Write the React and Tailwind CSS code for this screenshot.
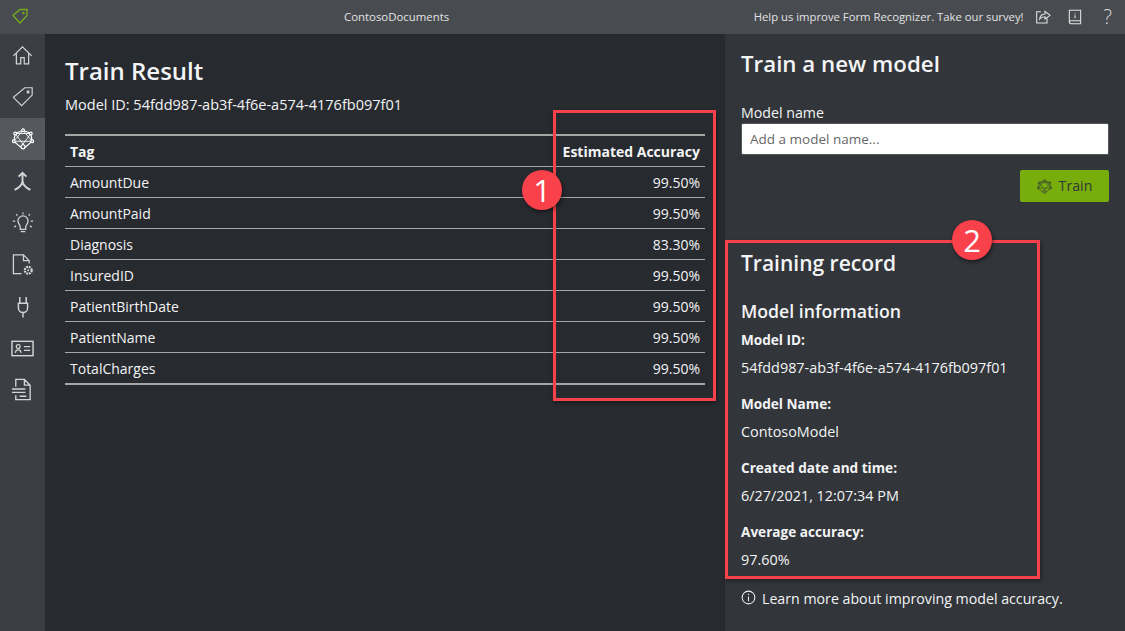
function NetIcon({ className = "", stroke = "#fff", fillC = "#55585d", sw = 1.3 }) {
  return (
    <svg viewBox="0 0 24 24" className={className} fill="none" stroke={stroke} strokeWidth={sw}>
      <path d="M12 2.5 L20.5 6 L22 14.5 L14.5 21 H9.5 L2 14.5 L3.5 6 Z" />
      <path d="M3.5 6 L20.5 6 M3.5 6 L14.5 21 M20.5 6 L9.5 21 M2 14.5 L12 2.5 M22 14.5 L12 2.5 M2 14.5 H22" strokeWidth={sw * 0.75} />
      <circle cx="12" cy="2.5" r="1.5" fill={fillC} />
      <circle cx="3.5" cy="6" r="1.5" fill={fillC} />
      <circle cx="20.5" cy="6" r="1.5" fill={fillC} />
      <circle cx="2" cy="14.5" r="1.5" fill={fillC} />
      <circle cx="22" cy="14.5" r="1.5" fill={fillC} />
      <circle cx="12" cy="20.5" r="2.2" fill={fillC} />
    </svg>
  );
}
const S = "#d4d4d4";
const side = [
  <svg viewBox="0 0 24 24" className="w-[21px] h-[21px]" fill="none" stroke={S} strokeWidth="1.4"><path d="M1.5 12.5 L12 2 L22.5 12.5 M5 9.5 V21.5 H10 V14.5 H14 V21.5 H19 V9.5" /></svg>,
  <svg viewBox="0 0 24 24" className="w-[22px] h-[22px] -mt-[2px]" fill="none" stroke={S} strokeWidth="1.3"><path d="M14 3 H22 V11 L10.5 22.5 L1.5 13.5 Z" /><circle cx="17.5" cy="7.5" r="1" fill={S} /></svg>,
  null,
  <svg viewBox="0 0 24 24" className="w-[21px] h-[23px]" fill="none" stroke={S} strokeWidth="2.2"><path d="M7.5 6.5 L12 2 L16.5 6.5 M12 3 V11 C12 16 8 19 3 21.5 M12 11 C12 16 16 19 21 21.5" /></svg>,
  <svg viewBox="0 0 24 24" className="w-[22px] h-[22px]" fill="none" stroke={S} strokeWidth="1.4"><path d="M9 19 V16 C9 14 6.5 13 6.5 9.8 A5.5 5.5 0 0 1 17.5 9.8 C17.5 13 15 14 15 16 V19 Z M9.5 21.5 H14.5" /><path d="M12 0.5 V2.5 M4.5 2.5 L5.9 3.9 M19.5 2.5 L18.1 3.9 M1 10 H3.5 M20.5 10 H23 M2.5 16.5 L4.5 15 M21.5 16.5 L19.5 15" /></svg>,
  <svg viewBox="0 0 24 24" className="w-[23px] h-[23px] -mt-[1px]" fill="none" stroke={S} strokeWidth="1.3"><path d="M11 21.5 H2.5 V2 H13 L19 8 V11 M13 2 V8 H19" /><circle cx="18" cy="18" r="3.6" strokeWidth="2.3" strokeDasharray="2 0.85" /><circle cx="18" cy="18" r="1" fill={S} stroke="none" /></svg>,
  <svg viewBox="0 0 24 24" className="w-[22px] h-[22px] -mt-[1px]" fill="none" stroke={S} strokeWidth="1.6"><path d="M8.5 1 V8 M15.5 1 V8 M7 8 H17 V13 A5 5 0 0 1 7 13 Z M12 18 V23.5" /></svg>,
  <svg viewBox="0 0 24 24" className="w-[23px] h-[23px] -mt-[1px]" fill="none" stroke={S} strokeWidth="1.5"><rect x="1" y="4.5" width="22" height="15" /><path d="M4.5 16.5 C5 12.5 10 12.5 10.5 16.5 M7.5 8 A2 2 0 1 0 7.6 12 A2 2 0 1 0 7.5 8 M13.5 10 H20 M13.5 14 H20" strokeWidth="1.3" /></svg>,
  <svg viewBox="0 0 24 24" className="w-[23px] h-[23px] -mt-[3px]" fill="none" stroke={S} strokeWidth="1.4"><path d="M5 9 V1.5 H14 L20 7.5 V22.5 H5 V18 M14 1.5 V7.5 H20 M1 11.5 H15 M1 15 H15 M9 19 H16" /></svg>,
];
const rows = ["AmountDue", "AmountPaid", "Diagnosis", "InsuredID", "PatientBirthDate", "PatientName", "TotalCharges"];
const acc = ["99.50%", "99.50%", "83.30%", "99.50%", "99.50%", "99.50%", "99.50%"];
const info = [
  ["Model ID:", "54fdd987-ab3f-4f6e-a574-4176fb097f01"],
  ["Model Name:", "ContosoModel"],
  ["Created date and time:", "6/27/2021, 12:07:34 PM"],
  ["Average accuracy:", "97.60%"],
];
function Badge({ n, className }) {
  return (
    <div className={"absolute w-[40px] h-[40px] rounded-full bg-[#f8414a] text-white text-[31px] leading-[40px] text-center shadow-[1px_2px_4px_rgba(0,0,0,0.5)] " + className}>{n}</div>
  );
}
export default function App() {
  return (
    <div className="relative w-[1125px] h-[631px] overflow-hidden flex flex-col bg-[#272a2f] text-[#f3f4f5] font-['Open_Sans','Noto_Sans',sans-serif]">
      <header className="h-[34px] shrink-0 bg-[#484b50] flex items-center pl-[12px] pr-[13px] text-[#e3e3e3]">
        <svg viewBox="0 0 16 16" className="w-[16px] h-[16px] -mt-[2px]" fill="none" stroke="#76ae1c" strokeWidth="1.3"><path d="M1 7.5 L8 1.5 H15 V7.5 L8 15 Z" /><circle cx="11.5" cy="5" r="0.6" fill="#76ae1c" /></svg>
        <div className="ml-[316px] text-[11.4px]">ContosoDocuments</div>
        <div className="ml-auto text-[11.3px] mr-[11px]">Help us improve Form Recognizer. Take our survey!</div>
        <svg viewBox="0 0 24 24" className="w-[16px] h-[16px] mr-[16px]" fill="none" stroke="#e3e3e3" strokeWidth="1.6"><path d="M9 4 H2.5 V21 H18 V14 M7 15 C8 9 12 7.5 15 7.5 V3.5 L22.5 9.5 L15 15 V11.5 C12 11.5 9 12.5 7 15 Z" /></svg>
        <svg viewBox="0 0 24 24" className="w-[16px] h-[16px] mr-[21px]" fill="none" stroke="#e3e3e3" strokeWidth="1.6"><path d="M3.5 21 V2 H20.5 V22 H6 A2.5 2.5 0 0 1 3.5 19.5 A2.5 2.5 0 0 1 6 17.5 H20.5 M12 6.5 V8 M12 9.5 V14" /></svg>
        <span className="text-[20px] leading-none text-[#d8d8d8] font-light">?</span>
      </header>
      <div className="flex-1 flex min-h-0">
        <nav className="w-[45px] shrink-0 bg-[#3b3e44] flex flex-col">
          {side.map((icon, i) => (
            <div key={i} className={"h-[42px] flex items-center justify-center" + (i === 2 ? " bg-[#55585d]" : "")}>
              {icon ?? <NetIcon className="w-[22px] h-[22px]" />}
            </div>
          ))}
        </nav>
        <main className="w-[680px] shrink-0 px-[20px] pt-[19px]">
          <h1 className="text-[24px] leading-[36px] font-semibold">Train Result</h1>
          <p className="mt-[6px] text-[14.5px] leading-[20px]">Model ID: 54fdd987-ab3f-4f6e-a574-4176fb097f01</p>
          <div className="mt-[19px] border-t-2 border-b-2 border-[#a6a6a6] text-[14px]">
            <div className="h-[30px] flex items-center justify-between px-[5px] font-bold">
              <span>Tag</span><span>Estimated Accuracy</span>
            </div>
            {rows.map((r, i) => (
              <div key={r} className="h-[31px] border-t border-[#a6a6a6] flex items-center justify-between px-[5px]">
                <span>{r}</span><span>{acc[i]}</span>
              </div>
            ))}
          </div>
        </main>
        <aside className="flex-1 bg-[#32353a] pl-[16px] pr-[16px] pt-[12px] text-[14.2px]">
          <h2 className="text-[22.3px] leading-[36px] font-semibold">Train a new model</h2>
          <label className="block mt-[21px] leading-[20px]">Model name</label>
          <div className="h-[32px] bg-white rounded-[2px] border border-[#555] flex items-center px-[8px] pt-[1px] text-[#666] text-[13.5px]">Add a model name...</div>
          <div className="flex justify-end mt-[15px]">
            <div className="w-[89px] h-[32px] rounded-[2px] bg-[#77ae0c] flex items-center justify-center gap-[7px] text-[#33363a]">
              <NetIcon className="w-[15px] h-[15px]" stroke="#33363a" fillC="#77ae0c" sw={1.1} />
              <span>Train</span>
            </div>
          </div>
          <h2 className="mt-[43px] text-[21px] leading-[36px] font-semibold">Training record</h2>
          <h3 className="mt-[17px] text-[17.7px] leading-[26px] font-semibold">Model information</h3>
          <div className="mt-[2px]">
            {info.map(([k, v]) => (
              <div key={k} className="mb-[8px]">
                <div className="font-bold leading-[28px] mt-[1px] text-[13.6px]">{k}</div>
                <div className="leading-[28px] text-[14.4px]">{v}</div>
              </div>
            ))}
          </div>
          <div className="flex items-center gap-[6px] mt-[14px]">
            <svg viewBox="0 0 16 16" className="w-[15px] h-[15px] -mt-[3px]" fill="none" stroke="#f3f4f5" strokeWidth="1.1"><circle cx="8" cy="8" r="6.8" /><path d="M8 4 V5.3 M8 6.8 V12" /></svg>
            <span>Learn more about improving model accuracy.</span>
          </div>
        </aside>
      </div>
      <div className="absolute left-[553px] top-[110px] w-[163px] h-[291px] border-[3px] border-[#f8414a] shadow-[1px_2px_4px_rgba(0,0,0,0.4)]" />
      <div className="absolute left-[725px] top-[240px] w-[315px] h-[339px] border-[3px] border-[#f8414a] shadow-[1px_2px_4px_rgba(0,0,0,0.4)]" />
      <Badge n="1" className="left-[522px] top-[170px]" />
      <Badge n="2" className="left-[952px] top-[220px]" />
    </div>
  );
}
